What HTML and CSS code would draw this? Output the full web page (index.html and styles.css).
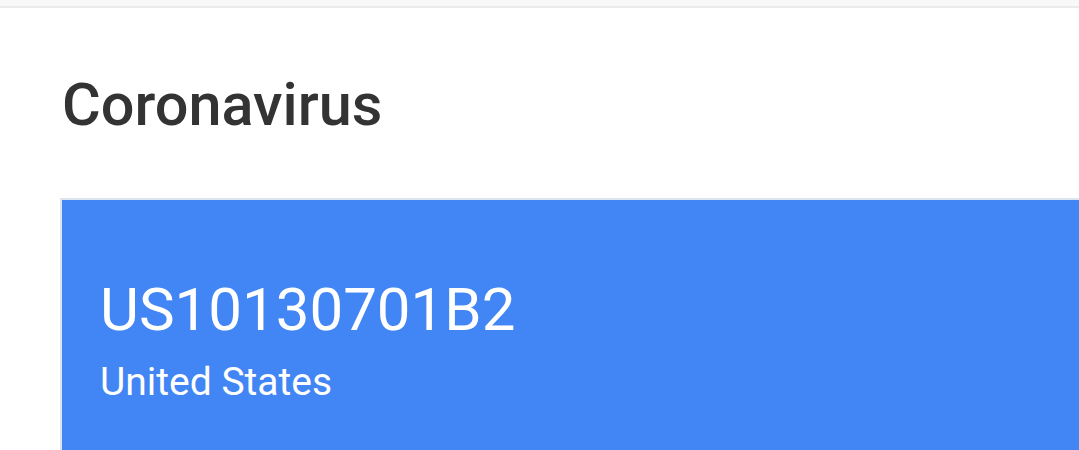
FILE: index.html
```html
<!DOCTYPE html>
<html lang="en">
<head>
    <meta charset="UTF-8">
    <meta name="viewport" content="width=device-width, initial-scale=1.0">
    <title>Coronavirus</title>
    <link rel="stylesheet" href="styles.css">
</head>
<body>
    <div class="topbar"></div>
    <div class="page">
        <h1 class="title">Coronavirus</h1>
        <div class="card">
            <div class="patent-id">US10130701B2</div>
            <div class="patent-country">United States</div>
        </div>
    </div>
</body>
</html>
```

FILE: styles.css
```css
body {
    font-family: 'Roboto', 'Liberation Sans', sans-serif;
    background: #fff;
    color: #333;
    margin: 0;
    padding: 0;
    overflow: hidden;
}
.topbar {
    height: 6px;
    background: #f8f8f8;
    border-bottom: 2px solid #ebebeb;
}
.page {
    padding: 0 0 0 60px;
}
.title {
    margin: 0;
    padding: 65px 0 0 2px;
    font-size: 59.4px;
    font-weight: 500;
    line-height: 64px;
    color: #333;
}
.card {
    margin-top: 61px;
    margin-right: -40px;
    background: #4285f4;
    border: 2px solid #dce4ee;
    border-right: none;
    border-bottom: none;
    padding: 78px 0 47px 38px;
    color: #fff;
}
.patent-id {
    font-size: 60px;
    line-height: 64px;
}
.patent-country {
    font-size: 39px;
    line-height: 44px;
    margin-top: 18px;
}
```
